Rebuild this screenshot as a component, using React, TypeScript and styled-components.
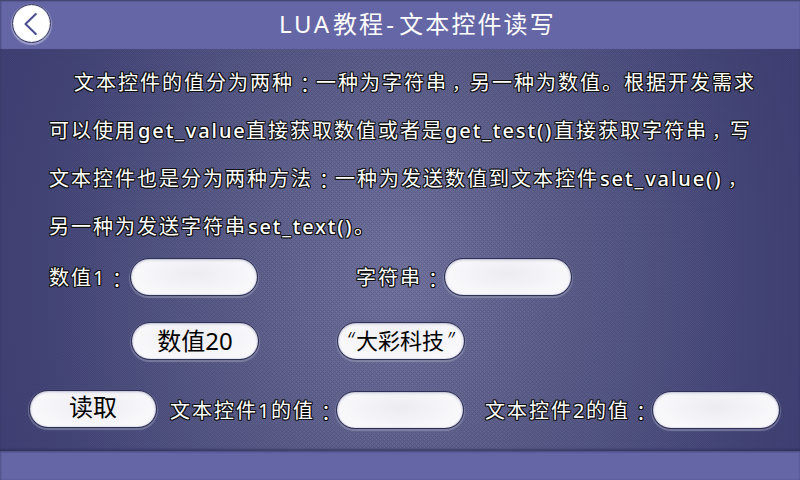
import React from "react";
import styled, { createGlobalStyle, css } from "styled-components";

const GlobalStyle = createGlobalStyle`
  * { box-sizing: border-box; }
  body { margin: 0; overflow: hidden; }
  button, input { font: inherit; }
`;

const weave =
  "data:image/svg+xml," +
  encodeURIComponent(
    '<svg xmlns="http://www.w3.org/2000/svg" width="4" height="4" shape-rendering="crispEdges">' +
      '<path d="M0 0h1v1H0zM1 1h1v1H1zM3 1h1v1H3zM2 2h1v1H2zM1 3h1v1H1zM3 3h1v1H3z" fill="#23244a" fill-opacity=".2"/></svg>'
  );

const Screen = styled.div`
  width: 800px;
  height: 480px;
  display: grid;
  grid-template-rows: 49px 402px 29px;
  overflow: hidden;
  color: #fff;
  font-family: "Noto Sans", "Noto Sans CJK SC", sans-serif;
`;

const Header = styled.header`
  display: grid;
  grid-template-columns: 64px 1fr 47px;
  background: #6466a5;
  box-shadow: inset 0 1px 1px #43446d, inset 1px 1px 2px #4d4f84;
`;

const Footer = styled.footer`
  background: #6466a5;
  box-shadow: inset 0 1px 2px #4b4d80, inset 1px 0 2px #55578f;
`;

const BackButton = styled.button`
  width: 39px;
  height: 39px;
  margin: 4px 0 0 12px;
  padding: 0;
  display: flex;
  align-items: center;
  justify-content: center;
  border: 1px solid #35365f;
  border-radius: 50%;
  background: #fff;
  box-shadow: inset 0 0 1px #6c6da0, 0 1px 1px 1px rgba(205, 206, 232, 0.55);
`;

const Title = styled.h1`
  display: flex;
  margin: 0;
  padding-left: 215px;
  font-size: 24px;
  font-weight: 400;
  line-height: 48px;
  letter-spacing: 2.1px;
  white-space: nowrap;
`;

const TitleLatin = styled.span<{ $width: number; $inset?: number }>`
  flex: none;
  width: ${(p) => p.$width}px;
  padding-left: ${(p) => p.$inset ?? 0}px;
  letter-spacing: 2.6px;
`;

const Panel = styled.main`
  display: flex;
  flex-direction: column;
  background:
    url("${weave}") 0 0 / 4px 4px,
    radial-gradient(ellipse 420px 540px at 400px 225px, #7375a0 0%, #5a5c88 45%, #444678 85%, #404174 100%);
  box-shadow: inset 0 -2px 2px rgba(45, 45, 85, 0.6);
`;

const outline = css`
  text-shadow: -1px -1px 0 #111, 0 -1px 0 #111, 1px -1px 0 #111, -1px 0 0 #111,
    1px 0 0 #111, -1px 1px 0 #111, 0 1px 0 #111, 1px 1px 0 #111;
`;

const Paragraph = styled.div`
  padding: 10px 0 0 49px;
  height: 209px;
  ${outline}
`;

const Line = styled.p<{ $indent?: number }>`
  display: flex;
  height: 48px;
  margin: 0;
  padding-left: ${(p) => p.$indent ?? 0}px;
  font-size: 20px;
  line-height: 48px;
  letter-spacing: 2px;
  white-space: nowrap;
`;

const Latin = styled.span<{ $width: number; $spacing?: number }>`
  flex: none;
  width: ${(p) => p.$width}px;
  padding-left: 1px;
  font-weight: 500;
  letter-spacing: ${(p) => p.$spacing ?? 1.9}px;
`;

const Digit = styled.span`
  flex: none;
  width: 13px;
  letter-spacing: 0;
`;

const Colon = styled.span`
  flex: none;
  width: 22px;
  padding: 2px 0 0 1px;
  font-family: "Noto Sans CJK TC", sans-serif;
  letter-spacing: 0;
`;

const Comma = styled.span`
  flex: none;
  width: 22px;
  padding-left: 4px;
  font-size: 18px;
  letter-spacing: 0;
`;

const Row = styled.div<{ $height: number; $left: number }>`
  display: flex;
  align-items: flex-start;
  height: ${(p) => p.$height}px;
  padding-left: ${(p) => p.$left}px;
`;

const Label = styled.label<{ $width: number; $left?: number; $top?: number }>`
  flex: none;
  display: flex;
  width: ${(p) => p.$width}px;
  margin: ${(p) => p.$top ?? 1}px 0 0 ${(p) => p.$left ?? 0}px;
  font-size: 20px;
  line-height: 37px;
  letter-spacing: 2px;
  white-space: nowrap;
  ${outline}
`;

const pill = css`
  flex: none;
  width: 128px;
  height: 38px;
  padding: 0;
  border: 1px solid #2f3057;
  border-radius: 19px;
  background: radial-gradient(ellipse 58px 22px at 50% 42%, #ededf1, #f8f8fb);
  box-shadow: inset 0 0 1px #62638c, inset 0 1px 3px #c3c3d6,
    0 0 1px 0 rgba(60, 61, 98, 0.8), 0 1px 1px 1px rgba(175, 177, 197, 0.45);
`;

const Field = styled.input<{ $top?: number }>`
  ${pill}
  margin: ${(p) => p.$top ?? 0}px 0 0;
`;

const PillButton = styled.button<{ $left?: number; $size?: number; $leading?: number; $shift?: number }>`
  ${pill}
  display: flex;
  justify-content: center;
  padding-right: ${(p) => p.$shift ?? 0}px;
  margin-left: ${(p) => p.$left ?? 0}px;
  color: #000;
  font-size: ${(p) => p.$size ?? 24}px;
  line-height: ${(p) => p.$leading ?? 35}px;
  white-space: nowrap;
`;

const Quote = styled.span`
  width: 12px;
  font-size: 22px;
  font-style: italic;
  font-weight: 300;
  line-height: 33px;
`;

export default function App() {
  return (
    <Screen>
      <GlobalStyle />
      <Header>
        <BackButton aria-label="返回">
          <svg width="37" height="37" viewBox="0 0 37 37" fill="none">
            <path d="M22.8 9 12.5 19 22.8 29" stroke="#4a4c91" strokeWidth="2" strokeLinecap="round" strokeLinejoin="round" />
          </svg>
        </BackButton>
        <Title>
          <TitleLatin $width={54}>LUA</TitleLatin>教程
          <TitleLatin $width={14} $inset={1}>-</TitleLatin>文本控件读写
        </Title>
      </Header>
      <Panel>
        <Paragraph>
          <Line $indent={25}>
            文本控件的值分为两种<Colon>：</Colon>一种为字符串<Comma>，</Comma>
            另一种为数值。根据开发需求
          </Line>
          <Line>
            可以使用<Latin $width={109}>get_value</Latin>直接获取数值或者是
            <Latin $width={110}>get_test()</Latin>直接获取字符串<Comma>，</Comma>写
          </Line>
          <Line>
            文本控件也是分为两种方法<Colon>：</Colon>一种为发送数值到文本控件
            <Latin $width={125}>set_value()</Latin>
            <Comma>，</Comma>
          </Line>
          <Line>
            另一种为发送字符串<Latin $width={107} $spacing={1.8}>set_text()</Latin>。
          </Line>
        </Paragraph>
        <Row $height={64} $left={49}>
          <Label $width={81}>
            数值<Digit>1</Digit>
            <Colon>：</Colon>
          </Label>
          <Field readOnly />
          <Label $width={88} $left={98}>
            字符串<Colon>：</Colon>
          </Label>
          <Field readOnly />
        </Row>
        <Row $height={68} $left={131}>
          <PillButton>数值20</PillButton>
          <PillButton $left={78} $size={22} $shift={2}>
            <Quote>“</Quote>大彩科技<Quote>”</Quote>
          </PillButton>
        </Row>
        <Row $height={61} $left={29}>
          <PillButton $leading={31}>读取</PillButton>
          <Label $width={166} $left={13} $top={2}>
            文本控件<Digit>1</Digit>的值<Colon>：</Colon>
          </Label>
          <Field readOnly $top={1} />
          <Label $width={167} $left={21} $top={2}>
            文本控件<Digit>2</Digit>的值<Colon>：</Colon>
          </Label>
          <Field readOnly $top={1} />
        </Row>
      </Panel>
      <Footer />
    </Screen>
  );
}
